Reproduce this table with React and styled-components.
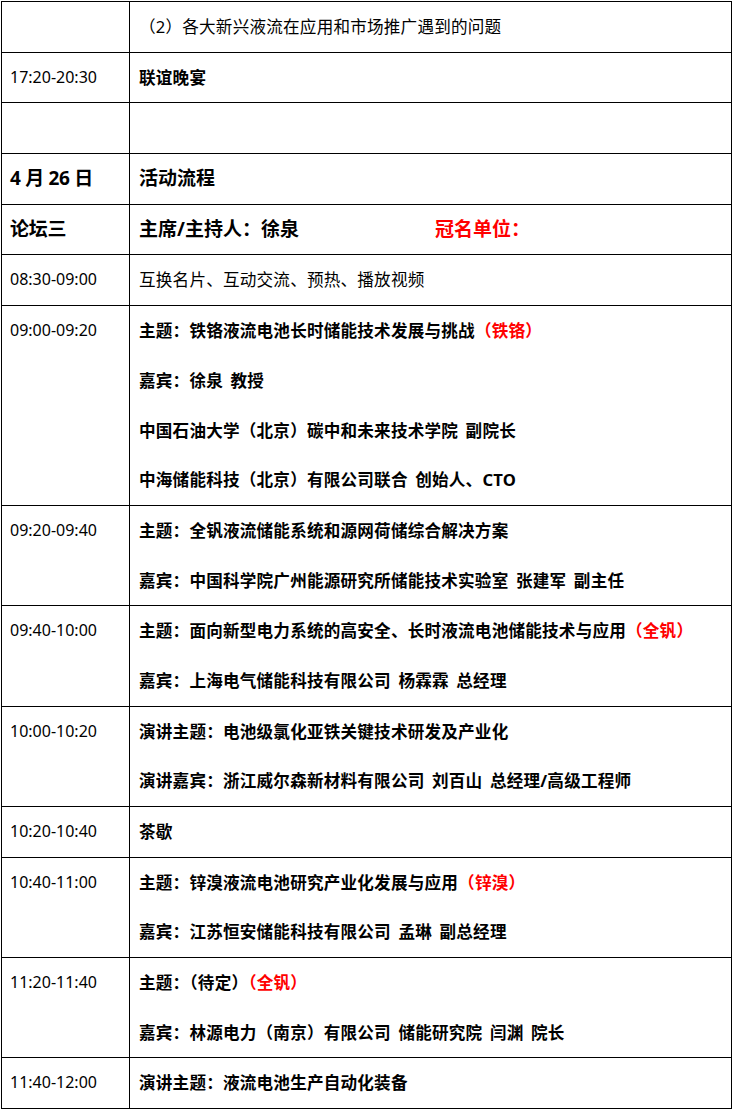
import React from "react"
import styled, {createGlobalStyle} from "styled-components"

const GlobalStyle = createGlobalStyle`
    html, body {
        margin: 0;
        padding: 0;
        background: #fff;
    }
    body {
        font-family: "Noto Sans", "Noto Sans CJK SC", sans-serif;
        color: #000;
    }
`

const Page = styled.div`
    padding: 1px 0 0 1px;
`
const Schedule = styled.table`
    width: 731px;
    border-collapse: collapse;
    table-layout: fixed;
`
const TimeCell = styled.td`
    width: 111px;
    border: 1px solid #000;
    padding: 0 8px;
    vertical-align: top;
`
const ContentCell = styled.td`
    border: 1px solid #000;
    padding: 0 9px;
    vertical-align: top;
`
const Line = styled.div`
    height: 49.7px;
    line-height: 49.7px;
    white-space: nowrap;
    font-size: ${p => p.$head ? "19px" : "16.6px"};
    font-weight: ${p => p.$bold || p.$head ? 700 : 400};
    letter-spacing: ${p => p.$head ? "0" : "0.2px"};
    word-spacing: ${p => p.$head ? "0" : "3px"};
`
const TimeText = styled(Line)`
    font-size: 16px;
    letter-spacing: 0;
`
const DayText = styled(Line)`
    letter-spacing: -0.3px;
`
const Tag = styled.span`
    color: #ff0000;
`
const Sponsor = styled.span`
    color: #ff0000;
    margin-left: 136px;
`

const rows = [
    {time: "", lines: [{text: "（2）各大新兴液流在应用和市场推广遇到的问题"}]},
    {time: "17:20-20:30", bold: true, lines: [{text: "联谊晚宴"}]},
    {time: "", lines: [{text: ""}]},
    {time: "4 月 26 日", head: true, lines: [{text: "活动流程"}]},
    {time: "论坛三", head: true, lines: [{text: "主席/主持人：徐泉", sponsor: "冠名单位："}]},
    {time: "08:30-09:00", lines: [{text: "互换名片、互动交流、预热、播放视频"}]},
    {time: "09:00-09:20", bold: true, lines: [
        {text: "主题：铁铬液流电池长时储能技术发展与挑战", tag: "（铁铬）"},
        {text: "嘉宾：徐泉 教授"},
        {text: "中国石油大学（北京）碳中和未来技术学院 副院长"},
        {text: "中海储能科技（北京）有限公司联合 创始人、CTO"},
    ]},
    {time: "09:20-09:40", bold: true, lines: [
        {text: "主题：全钒液流储能系统和源网荷储综合解决方案"},
        {text: "嘉宾：中国科学院广州能源研究所储能技术实验室 张建军 副主任"},
    ]},
    {time: "09:40-10:00", bold: true, lines: [
        {text: "主题：面向新型电力系统的高安全、长时液流电池储能技术与应用", tag: "（全钒）"},
        {text: "嘉宾：上海电气储能科技有限公司 杨霖霖 总经理"},
    ]},
    {time: "10:00-10:20", bold: true, lines: [
        {text: "演讲主题：电池级氯化亚铁关键技术研发及产业化"},
        {text: "演讲嘉宾：浙江威尔森新材料有限公司 刘百山 总经理/高级工程师"},
    ]},
    {time: "10:20-10:40", bold: true, lines: [{text: "茶歇"}]},
    {time: "10:40-11:00", bold: true, lines: [
        {text: "主题：锌溴液流电池研究产业化发展与应用", tag: "（锌溴）"},
        {text: "嘉宾：江苏恒安储能科技有限公司 孟琳 副总经理"},
    ]},
    {time: "11:20-11:40", bold: true, lines: [
        {text: "主题：（待定）", tag: "（全钒）"},
        {text: "嘉宾：林源电力（南京）有限公司 储能研究院 闫渊 院长"},
    ]},
    {time: "11:40-12:00", bold: true, lines: [{text: "演讲主题：液流电池生产自动化装备"}]},
]

const App = () => {
    return (
        <Page>
            <GlobalStyle/>
            <Schedule>
                <tbody>
                {rows.map((row, i) => (
                    <tr key={i}>
                        <TimeCell>
                            {row.head
                                ? <DayText $head>{row.time}</DayText>
                                : <TimeText>{row.time}</TimeText>}
                        </TimeCell>
                        <ContentCell>
                            {row.lines.map((line, j) => (
                                <Line key={j} $bold={row.bold} $head={row.head}>
                                    {line.text}
                                    {line.tag && <Tag>{line.tag}</Tag>}
                                    {line.sponsor && <Sponsor>{line.sponsor}</Sponsor>}
                                </Line>
                            ))}
                        </ContentCell>
                    </tr>
                ))}
                </tbody>
            </Schedule>
        </Page>
    )
}

export default App
